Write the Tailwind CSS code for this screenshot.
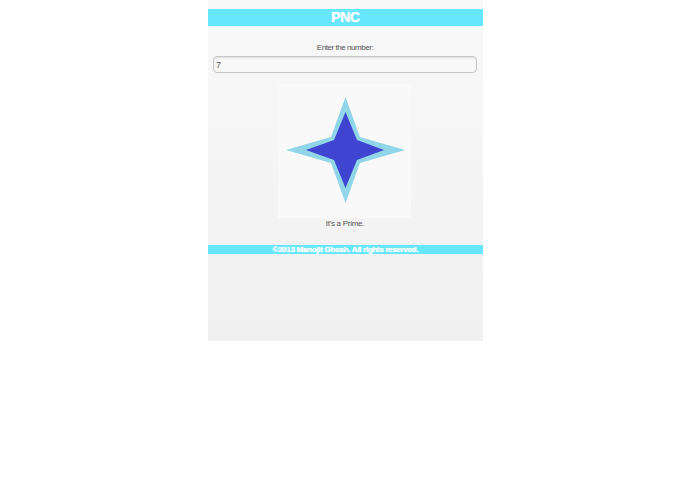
<!DOCTYPE html>
<html lang="en">
<head>
    <meta charset="UTF-8">
    <title>PNC</title>
    <script src="https://cdn.jsdelivr.net/npm/@tailwindcss/browser@4"></script>
</head>
<body class="bg-white font-['Liberation_Sans',Arial,sans-serif]">
    <div class="ml-[208px] w-[275px] h-[341px] pt-[9px] bg-gradient-to-b from-[#f9f9f9] to-[#f0f0f0] flex flex-col">
        <!-- header -->
        <div class="h-[17px] bg-[#66e6ff] text-center text-white font-bold text-[14px] tracking-[-0.4px] leading-[17px] [text-shadow:0_0_1px_#fff]">PNC</div>

        <div class="flex flex-col">
            <label for="num" class="mt-[17px] h-[10px] pr-px text-center text-[8px] tracking-[-0.45px] leading-[10px] text-[#555]">Enter the number:</label>
            <input id="num" type="text" value="7" class="mt-[3px] ml-[5px] block w-[264px] h-[17px] px-[2px] text-[9px] text-[#555] bg-[#f9f9f9] border border-[#c8c8c8] rounded-[4px] shadow-[inset_0_1px_2px_#ddd]">

            <!-- star -->
            <div class="mt-[11px] ml-[70px] w-[133px] h-[134px] bg-[#f9f9f9]">
                <svg width="133" height="134" viewBox="278 84 133 134">
                    <polygon fill="#90d5e8" points="345.5,97 360,137 405,150 360,163 345.5,203 331,163 286,150 331,137"/>
                    <polygon fill="#3f45d0" points="345.5,112 357,140 384,150 357,160 345.5,188 334,160 306,150 334,140"/>
                </svg>
            </div>

            <p class="mt-px h-[10px] pr-px text-center text-[8px] tracking-[-0.28px] leading-[10px] text-[#555]">It's a Prime.</p>
        </div>

        <!-- footer -->
        <div class="mt-[16px] h-[9px] bg-[#66e6ff] text-center text-white font-bold text-[8px] tracking-[-0.3px] leading-[9px] [text-shadow:0_0_1px_#fff]">©2013 Manojit Ghosh. All rights reserved.</div>
    </div>
</body>
</html>
